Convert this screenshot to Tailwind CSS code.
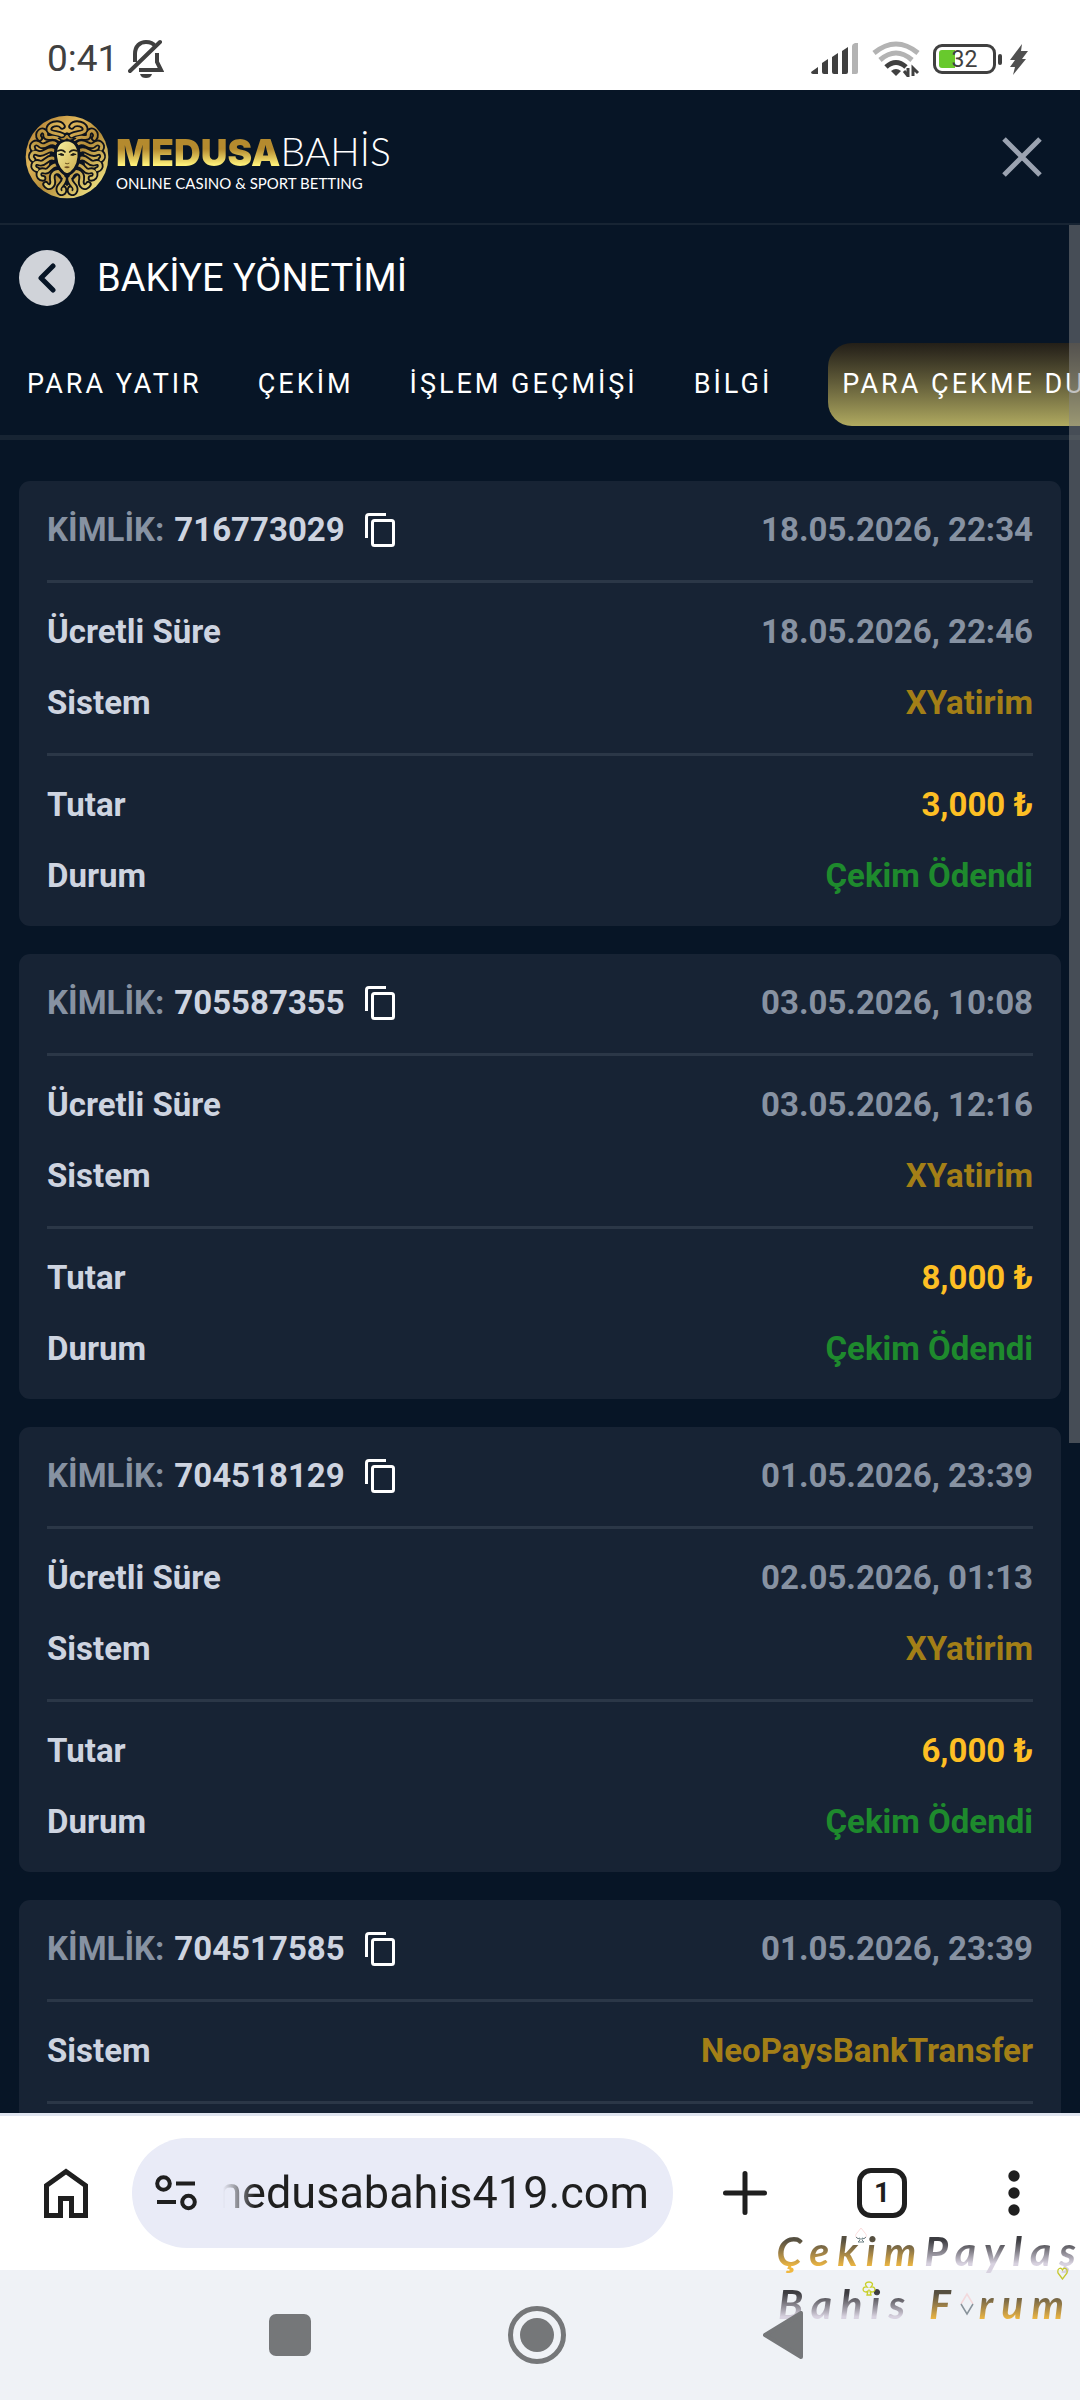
<!DOCTYPE html>
<html lang="tr">
<head>
<meta charset="utf-8">
<meta name="viewport" content="width=device-width, initial-scale=1">
<title>Bakiye Yönetimi</title>
<script src="https://cdn.jsdelivr.net/npm/@tailwindcss/browser@4"></script>
</head>
<body class="flex h-screen flex-col overflow-hidden bg-[#071526] font-['Roboto',sans-serif]">

<!-- Status bar -->
<div class="flex h-[90px] shrink-0 items-center justify-between bg-white pt-7 pr-[52px] pl-[47px] text-[#404040]">
  <div class="flex items-center gap-[10px]">
    <span class="text-[37px] leading-10">0:41</span>
    <svg class="h-10 w-9" viewBox="0 0 36 40" fill="none" stroke="#404040" stroke-width="4">
      <path d="M7 23V15C7 7 12 3 18 3c4 0 7 1 9 4"/><path d="M29 14v9l4 8H11"/><path d="M2 32L32 3" stroke-linecap="round"/><path d="M12 35h12c-1 3-3 4-6 4s-5-1-6-4z" fill="#404040" stroke="none"/>
    </svg>
  </div>
  <div class="flex items-center gap-[13px]">
    <svg class="h-8 w-12" viewBox="0 0 48 32" fill="#404040">
      <path d="M0 29l7-5v7H2q-2 0-2-2zM11 20l6-4v15h-4q-2 0-2-2zM21 14l6-4v21h-4q-2 0-2-2zM31 8l6-4v25q0 2-2 2h-4z"/><path d="M41 3q0-2 3-3h3v29q0 2-2 2h-4z" fill="#b3b3b3"/>
    </svg>
    <svg class="h-9 w-12" viewBox="0 0 48 36" fill="none" stroke-width="5">
      <path d="M2 12Q24-6 46 12" stroke="#b3b3b3"/><path d="M8 19Q24 5 40 19" stroke="#b3b3b3"/><path d="M14 26Q24 17 34 26" stroke="#404040"/><path d="M19 30q5-4 10 0l-5 5z" fill="#404040"/><path d="M36 27v8l-4-5M41 35v-8l5 5" stroke="#404040" stroke-width="3"/>
    </svg>
    <div class="flex items-center">
      <div class="relative h-[30px] w-[63px] rounded-[9px] border-3 border-[#404040]">
        <span class="absolute top-[3px] left-[3px] h-[18px] w-[16px] rounded-l-[3px] bg-[#68c92d]"></span>
        <span class="absolute inset-0 text-center text-[23px] leading-[26px]">32</span>
      </div>
      <span class="ml-[2px] h-[11px] w-1 rounded-full bg-[#404040]"></span>
      <svg class="ml-[6px] h-[31px] w-[20px]" viewBox="0 0 20 31" fill="#505050"><path d="M14 0L2 16h5l-5 7h5l-2 8L18 15h-4l6-8h-7z"/></svg>
    </div>
  </div>
</div>

<!-- Site header -->
<header class="flex h-[135px] shrink-0 items-center justify-between border-b-2 border-[#172433] pr-[38px] pl-[25px]">
  <a href="#" class="flex items-center gap-[7px]" aria-label="Medusabahis">
    <svg class="size-[84px]" viewBox="42 42 252 252" fill="none" stroke-linecap="round" stroke-linejoin="round">
      <defs>
        <linearGradient id="gold" x1="60" y1="60" x2="270" y2="280" gradientUnits="userSpaceOnUse"><stop offset="0" stop-color="#b07c30"/><stop offset=".3" stop-color="#deb65a"/><stop offset=".55" stop-color="#b58c38"/><stop offset="1" stop-color="#f5ec8c"/></linearGradient>
        <linearGradient id="skin" x1="0" x2="1" y1="0" y2="1"><stop offset="0" stop-color="#f9f4a4"/><stop offset="1" stop-color="#c9a848"/></linearGradient>
        <g id="half">
          <path d="M172 120C176 90 216 104 222 88C226 68 192 62 182 76"/>
          <path d="M190 116C210 98 234 122 232 98C240 78 262 98 250 112"/>
          <path d="M202 128C222 116 234 144 248 132C262 118 278 132 270 144"/>
          <path d="M208 148C226 138 238 166 256 156C274 148 280 168 270 176"/>
          <path d="M208 172C226 164 234 192 250 186C270 178 274 202 258 206"/>
          <path d="M200 192C216 188 220 216 236 210C256 204 258 232 240 232"/>
          <path d="M180 226C190 202 216 212 212 234C206 256 224 264 232 250"/>
          <path d="M176 232C176 252 196 252 192 268C188 280 174 276 178 264"/>
        </g>
      </defs>
      <circle cx="168" cy="168" r="124" fill="url(#gold)"/>
      <g stroke="#10131a" stroke-width="20"><use href="#half"/><use href="#half" transform="translate(336 0) scale(-1 1)"/></g>
      <path d="M118 108Q168 82 218 108L222 200L168 256L114 200z" fill="#0b1320"/>
      <g stroke="url(#gold)" stroke-width="9"><use href="#half"/><use href="#half" transform="translate(336 0) scale(-1 1)"/></g>
      <path d="M168 116C142 118 130 140 134 168C136 196 152 216 168 222C186 216 202 196 204 168C206 140 194 118 168 116z" fill="url(#skin)" stroke="#0b1320" stroke-width="9"/>
      <path d="M140 150q14-6 22 3M198 150q-14-6-22 3" stroke="#1b1a14" stroke-width="5"/>
      <path d="M144 160q8-6 15 2q-8 3-15-2zM194 160q-8-6-15 2q8 3 15-2z" fill="#1b1a14" stroke="#1b1a14" stroke-width="3"/>
      <path d="M163 187q5 4 11 0" stroke="#6d5420" stroke-width="3"/><path d="M159 198q9-4 18 0q-9 8-18 0z" fill="#6d4c20"/>
      <path d="M168 96l10 14l16 2q-18 10-26 2q-10 10-26-2l16-4z" fill="#b98f3a" stroke="#0b1320" stroke-width="4"/>
    </svg>
    <span class="flex flex-col pt-[10px] font-['Lato',sans-serif] text-white">
      <span class="flex items-baseline text-[39px] leading-10"><span class="bg-linear-to-b from-[#b48a2e] from-40% to-[#fff27a] to-80% bg-clip-text font-['Inter',sans-serif] text-[37px] font-black text-transparent">MEDUSA</span><span class="font-light">BAHİS</span></span>
      <span class="text-[15px] leading-5">ONLINE CASINO &amp; SPORT BETTING</span>
    </span>
  </a>
  <button type="button" aria-label="Kapat">
    <svg class="size-10" viewBox="0 0 40 40" fill="none" stroke="#9ba3b1" stroke-width="5"><path d="M2 2L38 38M38 2L2 38"/></svg>
  </button>
</header>

<!-- Scrolling content -->
<main class="relative min-h-0 flex-1 overflow-hidden">
  <div class="flex items-center gap-[22px] pt-[25px] pl-[19px]">
    <button type="button" aria-label="Geri" class="flex size-14 items-center justify-center rounded-full bg-[#d0d3d9]">
      <svg class="h-[30px] w-5" viewBox="0 0 20 30" fill="none" stroke="#071526" stroke-width="5" stroke-linecap="round" stroke-linejoin="round"><path d="M16 3L4 15L16 27"/></svg>
    </button>
    <h1 class="text-[38px] leading-[50px] text-white">BAKİYE YÖNETİMİ</h1>
  </div>
  <nav class="mt-[37px] flex items-center gap-14 overflow-hidden border-b-5 border-[#172433] pb-[9px] pl-[27px] text-[27px] leading-[83px] tracking-[3px] whitespace-nowrap text-white">
    <a href="#">PARA YATIR</a>
    <a href="#">ÇEKİM</a>
    <a href="#">İŞLEM GEÇMİŞİ</a>
    <a href="#">BİLGİ</a>
    <a href="#" aria-current="page" class="rounded-[24px] bg-linear-to-b from-[#231f18] to-[#b0aa60] px-[14px]">PARA ÇEKME DURUMU</a>
  </nav>
  <div id="cards" class="flex flex-col gap-7 pt-[41px] pr-[19px] pl-[19px]"></div>
  <span class="absolute top-0 right-0 h-[1218px] w-[11px] bg-[#868686]/50"></span>
</main>

<!-- Browser toolbar -->
<div class="flex h-[157px] shrink-0 items-center border-t-3 border-[#dfe4ef] bg-white pr-[60px] pl-[44px]">
  <button type="button" aria-label="Ana sayfa">
    <svg class="h-[50px] w-11" viewBox="0 0 44 50" fill="none" stroke="#1f1f1f" stroke-width="5"><path d="M2.500 47.500V17.500L22 3.500L41.500 17.500V47.500H27.500V30.500H16.500V47.500z"/></svg>
  </button>
  <div class="ml-11 flex h-[110px] min-w-0 flex-1 items-center rounded-full bg-[#e9ebf7] pr-6 pl-[23px]">
    <svg class="h-9 w-[42px] shrink-0" viewBox="0 0 42 36" fill="none" stroke="#1f1f1f" stroke-width="4"><circle cx="8.500" cy="8.500" r="6.300"/><circle cx="33.500" cy="27" r="6.300"/><path d="M21 8.500H40M2 27H21"/></svg>
    <div class="ml-[26px] flex min-w-0 flex-1 justify-end overflow-hidden mask-[linear-gradient(to_right,transparent,black_32px)]">
      <input type="text" aria-label="Adres" value="medusabahis419.com" class="w-[460px] shrink-0 text-right text-[45px] leading-[56px] text-[#1f1f1f]">
    </div>
  </div>
  <div class="flex items-center pl-[50px]">
    <button type="button" aria-label="Yeni sekme">
      <svg class="size-11" viewBox="0 0 44 44" stroke="#1f1f1f" stroke-width="5" stroke-linecap="round"><path d="M22 2.500V41.500M2.500 22H41.500"/></svg>
    </button>
    <button type="button" aria-label="Sekmeler" class="ml-[90px] flex size-[50px] items-center justify-center rounded-[14px] border-5 border-[#1f1f1f] text-[28px] font-bold text-[#1f1f1f]">1</button>
    <button type="button" aria-label="Menü" class="ml-[101px]">
      <svg class="h-[46px] w-3" viewBox="0 0 12 46" fill="#1f1f1f"><circle cx="6" cy="6" r="5.700"/><circle cx="6" cy="23" r="5.700"/><circle cx="6" cy="40" r="5.700"/></svg>
    </button>
  </div>
</div>

<!-- System navigation -->
<div class="relative grid h-[130px] shrink-0 grid-cols-[290px_1fr_297px] items-center bg-[#eff2f6]">
  <!-- Forum signature lying over both bars -->
  <div class="absolute -top-[46px] right-0 z-0 flex flex-col items-end font-['Lato',sans-serif] text-[41px] leading-[53px] font-bold italic tracking-[8px] whitespace-nowrap">
    <span class="flex"><span class="bg-linear-to-b from-[#554f40] from-30% to-[#f0b840] to-80% bg-clip-text text-transparent">Çekim</span><span class="-mr-1 bg-linear-to-b from-[#3c3c40] from-30% to-[#d8d2e0] to-75% bg-clip-text text-transparent">Paylaş</span></span>
    <span class="flex gap-4 pr-2"><span class="bg-linear-to-b from-[#3c3c40] from-30% to-[#d8d2e0] to-75% bg-clip-text text-transparent">Bahis</span><span class="flex items-center bg-linear-to-b from-[#554f40] from-30% to-[#f0b840] to-80% bg-clip-text text-transparent">F<svg class="mr-1 h-6 w-4" viewBox="0 0 16 24" fill="none" stroke="#f3d9dc" stroke-width="1.500"><path d="M2 12L8 2L14 12"/><path d="M2 12L8 22L14 12" stroke="#87929a"/></svg>rum</span></span>
  </div>
  <svg class="absolute -top-[43px] right-[213px] h-4 w-3" viewBox="0 0 12 16" fill="none" stroke="#fbdcdc"><path d="M3 11C0 11 0 8 2 6L6 1L10 6C12 8 12 11 9 11"/><path d="M1 10q2 3 4 1v2l-2 2h6l-2-2v-2q2 2 4-1" stroke="#6c8084"/></svg>
  <svg class="absolute -top-[3px] right-3 h-[13px] w-[11px]" viewBox="0 0 11 13" fill="none" stroke="#c5c82e" stroke-width="1.300"><path d="M5.500 12L1 6C0 1 4 0 5.500 3C7 0 11 1 10 6z"/></svg>
  <svg class="absolute top-[11px] right-[204px] h-[15px] w-[14px]" viewBox="0 0 14 15" fill="none" stroke="#c9d02a" stroke-width="1.300"><path d="M5 6C2 3 4 1 7 1s5 2 2 5C14 5 14 11 10 11C9 11 8 10 8 10L9 14H5L6 10C6 10 5 11 4 11C0 11 0 5 5 6z"/></svg>
  <button type="button" aria-label="Son uygulamalar" class="mr-[-21px] size-[42px] justify-self-end rounded-[7px] bg-[#757779]"></button>
  <button type="button" aria-label="Ana ekran" class="flex size-[58px] items-center justify-center justify-self-center rounded-full border-5 border-[#757779]"><span class="size-[34px] rounded-full bg-[#757779]"></span></button>
  <button type="button" aria-label="Geri dön" class="z-10 -ml-5 justify-self-start">
    <svg class="h-12 w-10" viewBox="0 0 40 48" fill="#757779" stroke="#757779" stroke-width="4" stroke-linejoin="round"><path d="M2 24L38 2V46z"/></svg>
  </button>
</div>

<script>
const records = [
  { id: '716773029', date: '18.05.2026, 22:34', paid: '18.05.2026, 22:46', system: 'XYatirim', amount: '3,000 ₺', status: 'Çekim Ödendi' },
  { id: '705587355', date: '03.05.2026, 10:08', paid: '03.05.2026, 12:16', system: 'XYatirim', amount: '8,000 ₺', status: 'Çekim Ödendi' },
  { id: '704518129', date: '01.05.2026, 23:39', paid: '02.05.2026, 01:13', system: 'XYatirim', amount: '6,000 ₺', status: 'Çekim Ödendi' },
  { id: '704517585', date: '01.05.2026, 23:39', system: 'NeoPaysBankTransfer' }
];
const row = (label, value, color) => `<div class="flex justify-between"><dt>${label}</dt><dd class="${color}">${value}</dd></div>`;
document.getElementById('cards').innerHTML = records.map(r => `
  <article class="rounded-[11px] bg-[#172334] px-7 text-[33px] leading-[71px] font-bold text-[#ced4e0]">
    <div class="flex items-center justify-between pt-[13px] pb-[15px]">
      <div class="flex items-center"><span class="text-[#8792a2]">KİMLİK:</span><span class="ml-[10px]">${r.id}</span>
        <button type="button" aria-label="Kopyala" class="ml-5"><svg class="h-[34px] w-[30px]" viewBox="0 0 30 34" fill="none" stroke="#fff" stroke-width="3"><path d="M1.500 25V4Q1.500 1.500 4 1.500H21"/><rect x="7.500" y="7.500" width="21" height="25" rx="2"/></svg></button></div>
      <time class="text-[#8792a2]">${r.date}</time>
    </div>
    <dl class="border-t-3 border-[#2b3747] pt-[13px] pb-[15px]">${r.paid ? row('Ücretli Süre', r.paid, 'text-[#8792a2]') : ''}${row('Sistem', r.system, 'text-[#a37f17]')}</dl>
    <dl class="border-t-3 border-[#2b3747] pt-[13px] pb-[15px]">${r.amount ? row('Tutar', r.amount, 'text-[#fdbf24]') + row('Durum', r.status, 'text-[#1e8a2d]') : ''}</dl>
  </article>`).join('');
</script>
</body>
</html>
